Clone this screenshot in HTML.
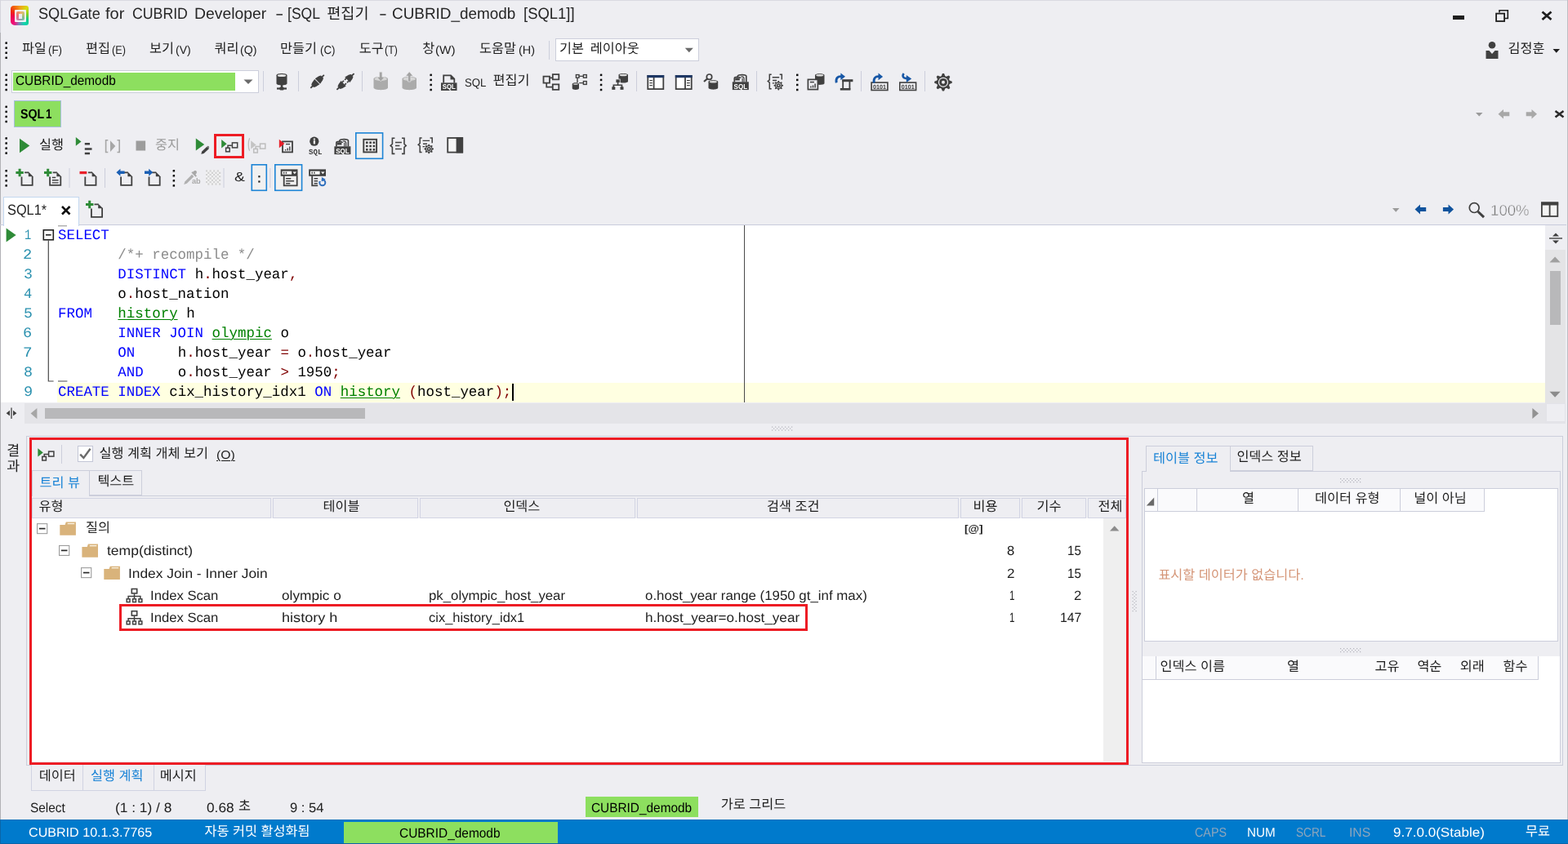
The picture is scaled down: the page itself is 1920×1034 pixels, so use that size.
<!DOCTYPE html>
<html lang="ko"><head><meta charset="utf-8"><title>SQLGate for CUBRID Developer</title>
<style>
html,body{margin:0;padding:0}
body{width:1920px;height:1034px;position:relative;overflow:hidden;background:#EEEEF2;font-family:"Liberation Sans",sans-serif;color:#1E1E1E;text-rendering:geometricPrecision}
.t{position:absolute;white-space:pre;line-height:1;transform-origin:0 0;font-kerning:none}
.b{position:absolute;box-sizing:border-box}
.k{color:#1E1E1E;font-family:"Liberation Sans","Noto Sans CJK KR",sans-serif}
.u{text-decoration:underline;text-underline-offset:2px;text-decoration-thickness:1px}
#root{position:absolute;left:0;top:0;width:1920px;height:1034px;will-change:transform}
#ov{position:absolute;left:0;top:0;width:1920px;height:1034px;pointer-events:none}
</style></head><body>
<div id="root">
<div class="b" style="left:0px;top:0px;width:1920px;height:1px;background:#D9D9E1;"></div>
<div class="b" style="left:0px;top:0px;width:1px;height:40px;background:#D4D4DC;"></div>
<div class="b" style="left:0px;top:40px;width:1px;height:964px;background:#B2B2B6;"></div>
<div class="b" style="left:1918.6px;top:0px;width:1.4px;height:1004px;background:#BDBDC4;"></div>
<div class="b" style="left:13px;top:7px;width:22px;height:24px;border-radius:4px 3px 3px 5px;background:conic-gradient(from 0deg at 50% 50%,#F39A1E 0deg,#D5DC10 45deg,#7FD320 80deg,#0FCB8C 120deg,#12D6B0 150deg,#7F7FB8 185deg,#F0107A 215deg,#EE0050 260deg,#F02A12 300deg,#F2730E 335deg,#F39A1E 360deg)"></div>
<div class="b" style="left:17.5px;top:11.5px;width:14px;height:15.5px;background:#F1F1F5;border-radius:1px;"></div>
<div class="b" style="left:20px;top:14px;width:10px;height:11px;border-radius:2px;opacity:.8;background:conic-gradient(from 0deg at 50% 50%,#F0A04A 0deg,#B8B850 60deg,#70B070 120deg,#60A898 160deg,#C06090 210deg,#E85060 270deg,#F07040 330deg,#F0A04A 360deg)"></div>
<div class="b" style="left:22.5px;top:16.5px;width:4.5px;height:6.5px;background:#ECECF2;"></div>
<span class="t" style="left:46.77px;top:7.55px;font-size:19.2px;color:#262626;transform:scaleX(0.9474);">SQLGate</span>
<span class="t" style="left:129.32px;top:7.55px;font-size:19.2px;color:#262626;transform:scaleX(1.0451);">for</span>
<span class="t" style="left:162.30px;top:7.55px;font-size:19.2px;color:#262626;transform:scaleX(0.9232);">CUBRID</span>
<span class="t" style="left:238.21px;top:7.55px;font-size:19.2px;color:#262626;transform:scaleX(1.0091);">Developer</span>
<span class="t" style="left:336.62px;top:7.55px;font-size:19.2px;color:#262626;transform:scaleX(1.6213);">-</span>
<span class="t" style="left:351.75px;top:7.55px;font-size:19.2px;color:#262626;transform:scaleX(0.9150);">[SQL</span>
<span class="t" style="left:464.09px;top:7.55px;font-size:19.2px;color:#262626;transform:scaleX(1.5360);">-</span>
<span class="t" style="left:480.44px;top:7.55px;font-size:19.2px;color:#262626;transform:scaleX(0.9850);">CUBRID_demodb</span>
<span class="t" style="left:641.08px;top:7.55px;font-size:19.2px;color:#262626;transform:scaleX(0.9621);">[SQL1]]</span>
<span class="t k" style="left:400.2px;top:8.4px;width:55.2px;font-size:18.6px">편집기</span>
<span class="t k" style="left:26.9px;top:51.7px;width:30.7px;font-size:16.3px">파일</span>
<span class="t" style="left:58.77px;top:54.98px;font-size:14.2px;color:#1E1E1E;transform:scaleX(0.9407);">(F)</span>
<span class="t k" style="left:105.0px;top:51.7px;width:30.8px;font-size:16.3px">편집</span>
<span class="t" style="left:137.42px;top:54.98px;font-size:14.2px;color:#1E1E1E;transform:scaleX(0.8912);">(E)</span>
<span class="t k" style="left:183.1px;top:51.7px;width:28.9px;font-size:16.3px">보기</span>
<span class="t" style="left:214.73px;top:54.98px;font-size:14.2px;color:#1E1E1E;transform:scaleX(0.9902);">(V)</span>
<span class="t k" style="left:262.5px;top:51.7px;width:28.7px;font-size:16.3px">쿼리</span>
<span class="t" style="left:294.12px;top:54.98px;font-size:14.2px;color:#1E1E1E;">(Q)</span>
<span class="t k" style="left:343.1px;top:51.7px;width:45.7px;font-size:16.3px">만들기</span>
<span class="t" style="left:391.67px;top:54.98px;font-size:14.2px;color:#1E1E1E;transform:scaleX(0.9414);">(C)</span>
<span class="t k" style="left:439.8px;top:51.7px;width:29.6px;font-size:16.3px">도구</span>
<span class="t" style="left:471.23px;top:54.98px;font-size:14.2px;color:#1E1E1E;transform:scaleX(0.8735);">(T)</span>
<span class="t k" style="left:517.3px;top:51.7px;width:14.1px;font-size:16.3px">창</span>
<span class="t" style="left:533.26px;top:54.98px;font-size:14.2px;color:#1E1E1E;transform:scaleX(1.0711);">(W)</span>
<span class="t k" style="left:587.0px;top:51.7px;width:46.0px;font-size:16.3px">도움말</span>
<span class="t" style="left:635.31px;top:54.98px;font-size:14.2px;color:#1E1E1E;transform:scaleX(1.0139);">(H)</span>
<div class="b" style="left:680px;top:47px;width:176px;height:28px;background:#FFFFFF;border:1px solid #CCCEDB;"></div>
<span class="t k" style="left:685.0px;top:51.8px;width:29.6px;font-size:16.3px">기본</span>
<span class="t k" style="left:722.8px;top:51.8px;width:63.0px;font-size:16.3px">레이아웃</span>
<span class="t k" style="left:1846.5px;top:51.7px;width:46.0px;font-size:16.3px">김정훈</span>
<div class="b" style="left:14px;top:86px;width:302.5px;height:27.5px;background:#FFFFFF;border:1px solid #CCCEDB;"></div>
<div class="b" style="left:16.4px;top:88.75px;width:271.6px;height:22.25px;background:#8DDF5F;"></div>
<span class="t" style="left:18.82px;top:91.20px;font-size:16.3px;color:#000;transform:scaleX(0.9415);">CUBRID_demodb</span>
<span class="t" style="left:569.40px;top:94.15px;font-size:14px;color:#1E1E1E;transform:scaleX(0.9401);">SQL</span>
<span class="t k" style="left:603.5px;top:90.7px;width:45.3px;font-size:16.3px">편집기</span>
<div class="b" style="left:17px;top:123px;width:58px;height:33px;background:#8DDF5F;border:1px solid #A6BEDC;"></div>
<span class="t" style="left:24.79px;top:131.59px;font-size:16.2px;color:#000;font-weight:bold;transform:scaleX(0.8783);">SQL</span>
<span class="t" style="left:56.36px;top:131.59px;font-size:16.2px;color:#000;font-weight:bold;transform:scaleX(0.8225);">1</span>
<span class="t k" style="left:48.0px;top:170.0px;width:30.8px;font-size:16.3px">실행</span>
<span class="t k" style="left:190.0px;top:170.0px;width:29.4px;font-size:16.3px;color:#9C9C9C">중지</span>
<div class="b" style="left:262px;top:164px;width:37px;height:30px;border:3px solid #ED1C24;"></div>
<span class="t" style="left:235.33px;top:217.96px;font-size:9.5px;color:#ABABAB;font-weight:bold;transform:scaleX(0.9598);">ab</span>
<span class="t" style="left:287.33px;top:209.86px;font-size:16px;color:#1E1E1E;transform:scaleX(1.1968);">&amp;</span>
<span class="t" style="left:1825.08px;top:248.56px;font-size:18.6px;color:#7A7A7A;-webkit-text-stroke:0.45px #EEEEF2;">100%</span>
<div class="b" style="left:0px;top:275px;width:1918px;height:1px;background:#C8CBDC;"></div>
<div class="b" style="left:1px;top:276px;width:1891px;height:217px;background:#FFFFFF;"></div>
<div class="b" style="left:70px;top:468.5px;width:1822px;height:24.5px;background:#FFFFE1;"></div>
<div class="b" style="left:911px;top:276px;width:1px;height:217px;background:#4A4A4A;"></div>
<div class="b" style="left:3.5px;top:240.5px;width:93.5px;height:36px;background:#FFFFFF;border:1px solid #C3D7EF;border-bottom:none;"></div>
<span class="t" style="left:9.46px;top:248.83px;font-size:17.8px;color:#1E1E1E;transform:scaleX(0.9190);">SQL1*</span>
<div class="b" style="left:1892px;top:276px;width:24.6px;height:30px;background:#EEEEF2;"></div>
<div class="b" style="left:1892px;top:306px;width:24.6px;height:187.5px;background:#E4E4E6;"></div>
<div class="b" style="left:1897.5px;top:332px;width:13.5px;height:66px;background:#B8B8BA;"></div>
<div class="b" style="left:1px;top:493.5px;width:29px;height:25.5px;background:#EEEEF2;"></div>
<div class="b" style="left:30px;top:493.5px;width:1862px;height:25.5px;background:#E4E4E8;"></div>
<div class="b" style="left:1892px;top:493.5px;width:24.6px;height:25.5px;background:#E3E3E8;"></div>
<div class="b" style="left:1894.3px;top:495px;width:21.3px;height:21.4px;background:#EEEEF2;"></div>
<div class="b" style="left:55px;top:500px;width:392px;height:13px;background:#B8B8BA;"></div>
<span class="t" style="left:30.01px;top:280.81px;font-size:17.46px;color:#2B91AF;font-family:'Liberation Mono',monospace;transform:scaleX(0.7883);">1</span>
<span class="t" style="left:28.48px;top:304.81px;font-size:17.46px;color:#2B91AF;font-family:'Liberation Mono',monospace;transform:scaleX(1.0731);">2</span>
<span class="t" style="left:28.67px;top:328.81px;font-size:17.46px;color:#2B91AF;font-family:'Liberation Mono',monospace;transform:scaleX(1.0389);">3</span>
<span class="t" style="left:28.93px;top:352.81px;font-size:17.46px;color:#2B91AF;font-family:'Liberation Mono',monospace;transform:scaleX(0.9870);">4</span>
<span class="t" style="left:28.67px;top:376.81px;font-size:17.46px;color:#2B91AF;font-family:'Liberation Mono',monospace;transform:scaleX(1.0389);">5</span>
<span class="t" style="left:28.43px;top:400.81px;font-size:17.46px;color:#2B91AF;font-family:'Liberation Mono',monospace;transform:scaleX(1.0675);">6</span>
<span class="t" style="left:28.31px;top:424.81px;font-size:17.46px;color:#2B91AF;font-family:'Liberation Mono',monospace;transform:scaleX(1.1073);">7</span>
<span class="t" style="left:28.61px;top:448.81px;font-size:17.46px;color:#2B91AF;font-family:'Liberation Mono',monospace;transform:scaleX(1.0497);">8</span>
<span class="t" style="left:28.52px;top:472.81px;font-size:17.46px;color:#2B91AF;font-family:'Liberation Mono',monospace;transform:scaleX(1.0663);">9</span>
<span class="t" style="left:71.00px;top:280.81px;font-size:17.46px;color:#0000FF;font-family:'Liberation Mono',monospace;transform:scaleX(1.0000)">SELECT</span>
<span class="t" style="left:144.35px;top:304.81px;font-size:17.46px;color:#8C8C8C;font-family:'Liberation Mono',monospace;transform:scaleX(1.0000)">/*+ recompile */</span>
<span class="t" style="left:144.35px;top:328.81px;font-size:17.46px;color:#0000FF;font-family:'Liberation Mono',monospace;transform:scaleX(1.0000)">DISTINCT</span>
<span class="t" style="left:238.65px;top:328.81px;font-size:17.46px;color:#000000;font-family:'Liberation Mono',monospace;transform:scaleX(1.0000)">h</span>
<span class="t" style="left:249.13px;top:328.81px;font-size:17.46px;color:#800000;font-family:'Liberation Mono',monospace;transform:scaleX(1.0000)">.</span>
<span class="t" style="left:259.60px;top:328.81px;font-size:17.46px;color:#000000;font-family:'Liberation Mono',monospace;transform:scaleX(1.0000)">host_year</span>
<span class="t" style="left:353.91px;top:328.81px;font-size:17.46px;color:#800000;font-family:'Liberation Mono',monospace;transform:scaleX(1.0000)">,</span>
<span class="t" style="left:144.35px;top:352.81px;font-size:17.46px;color:#000000;font-family:'Liberation Mono',monospace;transform:scaleX(1.0000)">o</span>
<span class="t" style="left:154.82px;top:352.81px;font-size:17.46px;color:#800000;font-family:'Liberation Mono',monospace;transform:scaleX(1.0000)">.</span>
<span class="t" style="left:165.30px;top:352.81px;font-size:17.46px;color:#000000;font-family:'Liberation Mono',monospace;transform:scaleX(1.0000)">host_nation</span>
<span class="t" style="left:71.00px;top:376.81px;font-size:17.46px;color:#0000FF;font-family:'Liberation Mono',monospace;transform:scaleX(1.0000)">FROM</span>
<span class="t u" style="left:144.35px;top:376.81px;font-size:17.46px;color:#008000;font-family:'Liberation Mono',monospace;transform:scaleX(1.0000)">history</span>
<span class="t" style="left:228.17px;top:376.81px;font-size:17.46px;color:#000000;font-family:'Liberation Mono',monospace;transform:scaleX(1.0000)">h</span>
<span class="t" style="left:144.35px;top:400.81px;font-size:17.46px;color:#0000FF;font-family:'Liberation Mono',monospace;transform:scaleX(1.0000)">INNER JOIN</span>
<span class="t u" style="left:259.60px;top:400.81px;font-size:17.46px;color:#008000;font-family:'Liberation Mono',monospace;transform:scaleX(1.0000)">olympic</span>
<span class="t" style="left:343.43px;top:400.81px;font-size:17.46px;color:#000000;font-family:'Liberation Mono',monospace;transform:scaleX(1.0000)">o</span>
<span class="t" style="left:144.35px;top:424.81px;font-size:17.46px;color:#0000FF;font-family:'Liberation Mono',monospace;transform:scaleX(1.0000)">ON</span>
<span class="t" style="left:217.69px;top:424.81px;font-size:17.46px;color:#000000;font-family:'Liberation Mono',monospace;transform:scaleX(1.0000)">h</span>
<span class="t" style="left:228.17px;top:424.81px;font-size:17.46px;color:#800000;font-family:'Liberation Mono',monospace;transform:scaleX(1.0000)">.</span>
<span class="t" style="left:238.65px;top:424.81px;font-size:17.46px;color:#000000;font-family:'Liberation Mono',monospace;transform:scaleX(1.0000)">host_year</span>
<span class="t" style="left:343.43px;top:424.81px;font-size:17.46px;color:#800000;font-family:'Liberation Mono',monospace;transform:scaleX(1.0000)">=</span>
<span class="t" style="left:364.38px;top:424.81px;font-size:17.46px;color:#000000;font-family:'Liberation Mono',monospace;transform:scaleX(1.0000)">o</span>
<span class="t" style="left:374.86px;top:424.81px;font-size:17.46px;color:#800000;font-family:'Liberation Mono',monospace;transform:scaleX(1.0000)">.</span>
<span class="t" style="left:385.34px;top:424.81px;font-size:17.46px;color:#000000;font-family:'Liberation Mono',monospace;transform:scaleX(1.0000)">host_year</span>
<span class="t" style="left:144.35px;top:448.81px;font-size:17.46px;color:#0000FF;font-family:'Liberation Mono',monospace;transform:scaleX(1.0000)">AND</span>
<span class="t" style="left:217.69px;top:448.81px;font-size:17.46px;color:#000000;font-family:'Liberation Mono',monospace;transform:scaleX(1.0000)">o</span>
<span class="t" style="left:228.17px;top:448.81px;font-size:17.46px;color:#800000;font-family:'Liberation Mono',monospace;transform:scaleX(1.0000)">.</span>
<span class="t" style="left:238.65px;top:448.81px;font-size:17.46px;color:#000000;font-family:'Liberation Mono',monospace;transform:scaleX(1.0000)">host_year</span>
<span class="t" style="left:343.43px;top:448.81px;font-size:17.46px;color:#800000;font-family:'Liberation Mono',monospace;transform:scaleX(1.0000)">&gt;</span>
<span class="t" style="left:364.38px;top:448.81px;font-size:17.46px;color:#000000;font-family:'Liberation Mono',monospace;transform:scaleX(1.0000)">1950</span>
<span class="t" style="left:406.30px;top:448.81px;font-size:17.46px;color:#800000;font-family:'Liberation Mono',monospace;transform:scaleX(1.0000)">;</span>
<span class="t" style="left:71.00px;top:472.81px;font-size:17.46px;color:#0000FF;font-family:'Liberation Mono',monospace;transform:scaleX(1.0000)">CREATE INDEX</span>
<span class="t" style="left:207.21px;top:472.81px;font-size:17.46px;color:#000000;font-family:'Liberation Mono',monospace;transform:scaleX(1.0000)">cix_history_idx1</span>
<span class="t" style="left:385.34px;top:472.81px;font-size:17.46px;color:#0000FF;font-family:'Liberation Mono',monospace;transform:scaleX(1.0000)">ON</span>
<span class="t u" style="left:416.77px;top:472.81px;font-size:17.46px;color:#008000;font-family:'Liberation Mono',monospace;transform:scaleX(1.0000)">history</span>
<span class="t" style="left:500.60px;top:472.81px;font-size:17.46px;color:#800000;font-family:'Liberation Mono',monospace;transform:scaleX(1.0000)">(</span>
<span class="t" style="left:511.08px;top:472.81px;font-size:17.46px;color:#000000;font-family:'Liberation Mono',monospace;transform:scaleX(1.0000)">host_year</span>
<span class="t" style="left:605.38px;top:472.81px;font-size:17.46px;color:#800000;font-family:'Liberation Mono',monospace;transform:scaleX(1.0000)">)</span>
<span class="t" style="left:615.86px;top:472.81px;font-size:17.46px;color:#800000;font-family:'Liberation Mono',monospace;transform:scaleX(1.0000)">;</span>
<div class="b" style="left:627px;top:470px;width:2px;height:21px;background:#000;"></div>
<div class="b" style="left:32px;top:534px;width:1882px;height:404px;border:1px solid #CCCEDB;"></div>
<span class="t k" style="left:8.2px;top:544.1px;width:17.0px;font-size:17.3px">결</span>
<span class="t k" style="left:8.2px;top:563.1px;width:17.2px;font-size:17.3px">과</span>
<div class="b" style="left:36px;top:536px;width:1346px;height:401px;border:3px solid #ED1C24;z-index:5;"></div>
<div class="b" style="left:95px;top:546px;width:19px;height:19.5px;background:#FFFFFF;border:1px solid #C3C6D6;"></div>
<span class="t k" style="left:121.5px;top:547.7px;width:143.0px;font-size:16.3px">실행 계획 개체 보기</span>
<span class="t u" style="left:265.02px;top:550.98px;font-size:14.2px;color:#1E1E1E;transform:scaleX(1.1098);">(O)</span>
<div class="b" style="left:39px;top:607px;width:1340px;height:1px;background:#CCCEDB;"></div>
<div class="b" style="left:39px;top:576px;width:71px;height:32px;background:#EEEEF2;border:1px solid #CCCEDB;border-bottom:none;"></div>
<div class="b" style="left:109px;top:576px;width:65px;height:31px;background:#EEEEF2;border:1px solid #CCCEDB;"></div>
<span class="t k" style="left:48.6px;top:584.0px;width:52.6px;font-size:16.3px;color:#1B84D6">트리 뷰</span>
<span class="t k" style="left:119.4px;top:582.4px;width:45.2px;font-size:16.3px">텍스트</span>
<div class="b" style="left:39px;top:610px;width:293px;height:24.5px;background:#EEEEF2;border:1px solid #D2D4E3;"></div>
<div class="b" style="left:334px;top:610px;width:178px;height:24.5px;background:#EEEEF2;border:1px solid #D2D4E3;"></div>
<div class="b" style="left:514px;top:610px;width:264px;height:24.5px;background:#EEEEF2;border:1px solid #D2D4E3;"></div>
<div class="b" style="left:780px;top:610px;width:394px;height:24.5px;background:#EEEEF2;border:1px solid #D2D4E3;"></div>
<div class="b" style="left:1176px;top:610px;width:73px;height:24.5px;background:#EEEEF2;border:1px solid #D2D4E3;"></div>
<div class="b" style="left:1251px;top:610px;width:79px;height:24.5px;background:#EEEEF2;border:1px solid #D2D4E3;"></div>
<div class="b" style="left:1332px;top:610px;width:47px;height:24.5px;background:#EEEEF2;border:1px solid #D2D4E3;"></div>
<span class="t k" style="left:47.6px;top:613.2px;width:30.6px;font-size:16.3px">유형</span>
<span class="t k" style="left:395.6px;top:613.2px;width:47.0px;font-size:16.3px">테이블</span>
<span class="t k" style="left:616.4px;top:613.2px;width:48.8px;font-size:16.3px">인덱스</span>
<span class="t k" style="left:939.0px;top:613.2px;width:69.0px;font-size:16.3px">검색 조건</span>
<span class="t k" style="left:1191.6px;top:613.2px;width:31.4px;font-size:16.3px">비용</span>
<span class="t k" style="left:1269.6px;top:613.2px;width:31.2px;font-size:16.3px">기수</span>
<span class="t k" style="left:1344.6px;top:613.2px;width:31.6px;font-size:16.3px">전체</span>
<div class="b" style="left:39px;top:634.5px;width:1312px;height:298px;background:#FFFFFF;"></div>
<div class="b" style="left:1351px;top:634.5px;width:28px;height:298px;background:#EFEFEF;"></div>
<span class="t k" style="left:105.0px;top:638.8px;width:30.6px;font-size:16.3px">질의</span>
<span class="t" style="left:130.53px;top:667.34px;font-size:16.2px;color:#1E1E1E;transform:scaleX(1.0815);">temp(distinct)</span>
<span class="t" style="left:156.80px;top:694.59px;font-size:16.2px;color:#1E1E1E;transform:scaleX(1.0711);">Index Join - Inner Join</span>
<span class="t" style="left:183.66px;top:721.84px;font-size:16.2px;color:#1E1E1E;transform:scaleX(1.0292);">Index Scan</span>
<span class="t" style="left:183.66px;top:749.09px;font-size:16.2px;color:#1E1E1E;transform:scaleX(1.0292);">Index Scan</span>
<span class="t" style="left:345.28px;top:721.84px;font-size:16.2px;color:#1E1E1E;transform:scaleX(1.0647);">olympic o</span>
<span class="t" style="left:344.74px;top:749.09px;font-size:16.2px;color:#1E1E1E;transform:scaleX(1.1177);">history h</span>
<span class="t" style="left:524.72px;top:721.84px;font-size:16.2px;color:#1E1E1E;transform:scaleX(1.0371);">pk_olympic_host_year</span>
<span class="t" style="left:525.10px;top:749.09px;font-size:16.2px;color:#1E1E1E;transform:scaleX(1.0178);">cix_history_idx1</span>
<span class="t" style="left:790.49px;top:721.84px;font-size:16.2px;color:#1E1E1E;transform:scaleX(1.0414);">o.host_year range (1950 gt_inf max)</span>
<span class="t" style="left:790.01px;top:749.09px;font-size:16.2px;color:#1E1E1E;transform:scaleX(1.0588);">h.host_year=o.host_year</span>
<span class="t" style="left:1181.23px;top:641.73px;font-size:12.6px;color:#1E1E1E;font-weight:bold;transform:scaleX(1.0902);">[@]</span>
<span class="t" style="left:1233.48px;top:667.34px;font-size:16.2px;color:#1E1E1E;transform:scaleX(1.0261);">8</span>
<span class="t" style="left:1307.25px;top:667.34px;font-size:16.2px;color:#1E1E1E;transform:scaleX(0.9314);">15</span>
<span class="t" style="left:1233.34px;top:694.59px;font-size:16.2px;color:#1E1E1E;transform:scaleX(1.0569);">2</span>
<span class="t" style="left:1307.25px;top:694.59px;font-size:16.2px;color:#1E1E1E;transform:scaleX(0.9314);">15</span>
<span class="t" style="left:1235.52px;top:721.84px;font-size:16.2px;color:#1E1E1E;transform:scaleX(0.7159);">1</span>
<span class="t" style="left:1314.96px;top:721.84px;font-size:16.2px;color:#1E1E1E;transform:scaleX(1.0298);">2</span>
<span class="t" style="left:1235.52px;top:749.09px;font-size:16.2px;color:#1E1E1E;transform:scaleX(0.7159);">1</span>
<span class="t" style="left:1297.79px;top:749.09px;font-size:16.2px;color:#1E1E1E;transform:scaleX(0.9768);">147</span>
<div class="b" style="left:146px;top:740px;width:843px;height:33px;border:3px solid #ED1C24;z-index:5;"></div>
<div class="b" style="left:1398px;top:576px;width:1513px;height:0px;"></div>
<div class="b" style="left:1398px;top:576.5px;width:513px;height:358.5px;border:1px solid #CCCEDB;"></div>
<div class="b" style="left:1403px;top:546px;width:104px;height:32px;background:#EEEEF2;border:1px solid #CCCEDB;border-bottom:none;"></div>
<div class="b" style="left:1506px;top:546px;width:102px;height:30.5px;background:#EEEEF2;border:1px solid #CCCEDB;"></div>
<span class="t k" style="left:1412.0px;top:553.8px;width:85.8px;font-size:16.3px;color:#1B84D6">테이블 정보</span>
<span class="t k" style="left:1514.4px;top:552.4px;width:85.4px;font-size:16.3px">인덱스 정보</span>
<div class="b" style="left:1401px;top:598px;width:507px;height:187.5px;background:#FFFFFF;border:1px solid #CCCEDB;"></div>
<div class="b" style="left:1401px;top:598px;width:16.5px;height:29px;background:#FAFAFC;border:1px solid #CCCEDB;"></div>
<div class="b" style="left:1416.5px;top:598px;width:49.0px;height:29px;background:#FAFAFC;border:1px solid #CCCEDB;"></div>
<div class="b" style="left:1464.5px;top:598px;width:125.5px;height:29px;background:#FAFAFC;border:1px solid #CCCEDB;"></div>
<div class="b" style="left:1589px;top:598px;width:125.5px;height:29px;background:#FAFAFC;border:1px solid #CCCEDB;"></div>
<div class="b" style="left:1713.5px;top:598px;width:104.5px;height:29px;background:#FAFAFC;border:1px solid #CCCEDB;"></div>
<span class="t k" style="left:1521.0px;top:602.8px;width:12.6px;font-size:16.3px">열</span>
<span class="t k" style="left:1610.0px;top:602.6px;width:84.8px;font-size:16.3px">데이터 유형</span>
<span class="t k" style="left:1731.2px;top:602.6px;width:69.0px;font-size:16.3px">널이 아님</span>
<span class="t k" style="left:1418.4px;top:696.6px;width:193.2px;font-size:16.3px;color:#D59678">표시할 데이터가 없습니다.</span>
<div class="b" style="left:1399px;top:804px;width:511px;height:129.6px;background:#FFFFFF;"></div>
<div class="b" style="left:1399px;top:804px;width:16.5px;height:28.5px;background:#FAFAFC;border:1px solid #CCCEDB;border-top:none;border-left:none;"></div>
<div class="b" style="left:1415.5px;top:804px;width:468.5px;height:28.5px;background:#FAFAFC;border:1px solid #CCCEDB;border-top:none;border-left:none;"></div>
<span class="t k" style="left:1420.6px;top:808.7px;width:85.6px;font-size:16.3px">인덱스 이름</span>
<span class="t k" style="left:1576.0px;top:808.7px;width:12.6px;font-size:16.3px">열</span>
<span class="t k" style="left:1683.6px;top:808.7px;width:31.6px;font-size:16.3px">고유</span>
<span class="t k" style="left:1735.4px;top:808.7px;width:31.6px;font-size:16.3px">역순</span>
<span class="t k" style="left:1787.8px;top:808.7px;width:31.6px;font-size:16.3px">외래</span>
<span class="t k" style="left:1840.6px;top:808.7px;width:31.6px;font-size:16.3px">함수</span>
<div class="b" style="left:38px;top:937px;width:214px;height:32px;background:#EEEEF2;border:1px solid #D0D3E2;border-top:none;"></div>
<div class="b" style="left:101px;top:937px;width:1px;height:31px;background:#D0D3E2;"></div>
<div class="b" style="left:188px;top:937px;width:1px;height:31px;background:#D0D3E2;"></div>
<span class="t k" style="left:47.7px;top:942.8px;width:44.2px;font-size:16.3px">데이터</span>
<span class="t k" style="left:111.0px;top:943.2px;width:66.6px;font-size:16.3px;color:#1B84D6">실행 계획</span>
<span class="t k" style="left:195.8px;top:942.8px;width:46.6px;font-size:16.3px">메시지</span>
<span class="t" style="left:36.50px;top:981.72px;font-size:16.4px;color:#1E1E1E;transform:scaleX(0.9393);">Select</span>
<span class="t" style="left:141.32px;top:981.72px;font-size:16.4px;color:#1E1E1E;transform:scaleX(1.0580);">(1 : 1) / 8</span>
<span class="t" style="left:252.73px;top:981.72px;font-size:16.4px;color:#1E1E1E;transform:scaleX(1.0535);">0.68</span>
<span class="t k" style="left:292.0px;top:979.6px;width:13.8px;font-size:16.3px">초</span>
<span class="t" style="left:355.02px;top:981.72px;font-size:16.4px;color:#1E1E1E;transform:scaleX(1.0105);">9 : 54</span>
<div class="b" style="left:717px;top:976px;width:138px;height:24.5px;background:#8DDF5F;"></div>
<span class="t" style="left:723.62px;top:981.69px;font-size:16.2px;color:#000;transform:scaleX(0.9504);">CUBRID_demodb</span>
<span class="t k" style="left:882.8px;top:978.4px;width:84.4px;font-size:16.3px">가로 그리드</span>
<div class="b" style="left:0px;top:1004px;width:1920px;height:30px;background:#007ACC;"></div>
<div class="b" style="left:0px;top:1004px;width:1px;height:30px;background:#0A66A8;"></div>
<span class="t" style="left:35.38px;top:1012.83px;font-size:15.8px;color:#FFFFFF;transform:scaleX(1.0193);">CUBRID 10.1.3.7765</span>
<span class="t k" style="left:250.6px;top:1010.8px;width:136.6px;font-size:16.3px;color:#FFFFFF">자동 커밋 활성화됨</span>
<div class="b" style="left:421px;top:1007px;width:262px;height:25.5px;background:#8DDF5F;"></div>
<div class="b" style="left:0px;top:1032.5px;width:1920px;height:1.5px;background:#0A64A6;"></div>
<div class="b" style="left:0px;top:1004px;width:1920px;height:1px;background:#0C72BC;"></div>
<span class="t" style="left:489.42px;top:1012.59px;font-size:16.2px;color:#000;transform:scaleX(0.9536);">CUBRID_demodb</span>
<span class="t" style="left:1463.07px;top:1013.03px;font-size:15.8px;color:#8EA6BC;transform:scaleX(0.9061);">CAPS</span>
<span class="t" style="left:1526.95px;top:1013.03px;font-size:15.8px;color:#FFFFFF;transform:scaleX(0.9644);">NUM</span>
<span class="t" style="left:1586.58px;top:1013.03px;font-size:15.8px;color:#8EA6BC;transform:scaleX(0.8654);">SCRL</span>
<span class="t" style="left:1651.55px;top:1013.03px;font-size:15.8px;color:#8EA6BC;transform:scaleX(0.9936);">INS</span>
<span class="t" style="left:1706.20px;top:1013.03px;font-size:15.8px;color:#FFFFFF;transform:scaleX(1.0793);">9.7.0.0(Stable)</span>
<span class="t k" style="left:1868.0px;top:1010.6px;width:29.4px;font-size:16.3px;color:#FFFFFF">무료</span>
<svg id="ov" viewBox="0 0 1920 1034" width="1920" height="1034">
<rect x="1779" y="19" width="14" height="5" fill="#1e1e1e"/>
<path d="M1836 15.5V12.7H1846.3V22.5H1843" fill="none" stroke="#1e1e1e" stroke-width="1.6"/><rect x="1832.1" y="16.6" width="10" height="9.4" fill="none" stroke="#1e1e1e" stroke-width="1.8"/>
<path d="M1888.5 14.5L1899.5 24M1899.5 14.5L1888.5 24" stroke="#1e1e1e" stroke-width="2.8" fill="none"/>
<rect x="5.4" y="50.5" width="1.6" height="1.6" fill="#FAFAFF"/><rect x="6.4" y="51.4" width="2.5" height="2.5" fill="#111"/><rect x="5.4" y="56.55" width="1.6" height="1.6" fill="#FAFAFF"/><rect x="6.4" y="57.449999999999996" width="2.5" height="2.5" fill="#111"/><rect x="5.4" y="62.6" width="1.6" height="1.6" fill="#FAFAFF"/><rect x="6.4" y="63.5" width="2.5" height="2.5" fill="#111"/><rect x="5.4" y="68.64999999999999" width="1.6" height="1.6" fill="#FAFAFF"/><rect x="6.4" y="69.55" width="2.5" height="2.5" fill="#111"/>
<rect x="672" y="50" width="1" height="23" fill="#CCCEDB"/>
<path d="M838.8 58.8H848.8L843.8 64.2Z" fill="#6A6A6A"/>
<circle cx="1827" cy="55.3" r="4.3" fill="#404040"/><path d="M1819.5 62H1823.5L1827 66L1830.5 62H1834.5V72H1819.5Z" fill="#404040"/>
<path d="M1901.5 60H1910L1905.75 64.8Z" fill="#1e1e1e"/>
<rect x="5.4" y="89.69999999999999" width="1.6" height="1.6" fill="#FAFAFF"/><rect x="6.4" y="90.6" width="2.5" height="2.5" fill="#111"/><rect x="5.4" y="95.74999999999999" width="1.6" height="1.6" fill="#FAFAFF"/><rect x="6.4" y="96.64999999999999" width="2.5" height="2.5" fill="#111"/><rect x="5.4" y="101.79999999999998" width="1.6" height="1.6" fill="#FAFAFF"/><rect x="6.4" y="102.69999999999999" width="2.5" height="2.5" fill="#111"/><rect x="5.4" y="107.85" width="1.6" height="1.6" fill="#FAFAFF"/><rect x="6.4" y="108.75" width="2.5" height="2.5" fill="#111"/>
<path d="M298.5 97.5H309.5L304 103Z" fill="#6A6A6A"/>
<rect x="322" y="87" width="1" height="25" fill="#CCCEDB"/>
<rect x="365" y="87" width="1" height="25" fill="#CCCEDB"/>
<rect x="443" y="87" width="1" height="25" fill="#CCCEDB"/>
<g transform="translate(338.5,90)"><path d="M0 2.2C0 -0.7 13 -0.7 13 2.2V12.3C13 15.2 0 15.2 0 12.3Z" fill="#404040"/><ellipse cx="6.5" cy="2.4" rx="5.2" ry="1.5" fill="#E6E6E6"/><rect x="5.3" y="14" width="2.4" height="4" fill="#404040"/><rect x="0.5" y="17.4" width="12" height="2.2" fill="#404040"/><rect x="4" y="16.4" width="5" height="4.2" rx="1" fill="#404040"/></g>
<g transform="translate(388.6,99.8)"><g transform="rotate(-44)"><path d="M-11.5 -0.9H-8.2 V-2.2L-5.8 -3.4L-0.45 -4.5V4.5L-5.8 3.4L-8.2 2.2V0.9H-11.5ZM11.5 -0.9H8.2 V-2.2L5.8 -3.4L0.45 -4.5V4.5L5.8 3.4L8.2 2.2V0.9H11.5Z" fill="#404040"/></g></g>
<g transform="translate(423,100)"><g transform="rotate(-43)"><path d="M-14.5 -0.9H-11 V-2.2L-8.4 -3.4L-3.2 -4.5V4.5L-8.4 3.4L-11 2.2V0.9H-14.5ZM14.5 -0.9H11 V-2.2L8.4 -3.4L3.2 -4.5V4.5L8.4 3.4L11 2.2V0.9H14.5Z" fill="#404040"/><rect x="-3.3" y="-3" width="6.6" height="1.6" fill="#404040"/><rect x="-3.3" y="1.4" width="6.6" height="1.6" fill="#404040"/><rect x="-0.7" y="-3.4" width="1.4" height="6.8" fill="#EEEEF2"/></g></g>
<g transform="translate(457.5,89)"><path d="M0 7.5C0 4.2 17.5 4.2 17.5 7.5V18.6C17.5 22 0 22 0 18.6Z" fill="#ABABAB"/><ellipse cx="8.75" cy="7.7" rx="7.6" ry="2.3" fill="#D6D6D6"/><path d="M8.75 10.8L13.4 5.4H10.4V-0.8H7.1V5.4H4.1Z" fill="#A2A2A2" stroke="#E4E4E4" stroke-width="0.6"/></g>
<g transform="translate(492.5,89)"><path d="M0 7.5C0 4.2 17.5 4.2 17.5 7.5V18.6C17.5 22 0 22 0 18.6Z" fill="#ABABAB"/><ellipse cx="8.75" cy="7.7" rx="7.6" ry="2.3" fill="#D6D6D6"/><path d="M8.75 -1.2L13.4 4.2H10.4V11H7.1V4.2H4.1Z" fill="#A2A2A2" stroke="#EEEEF2" stroke-width="0.6"/></g>
<rect x="525.4" y="89.69999999999999" width="1.6" height="1.6" fill="#FAFAFF"/><rect x="526.4" y="90.6" width="2.5" height="2.5" fill="#111"/><rect x="525.4" y="95.74999999999999" width="1.6" height="1.6" fill="#FAFAFF"/><rect x="526.4" y="96.64999999999999" width="2.5" height="2.5" fill="#111"/><rect x="525.4" y="101.79999999999998" width="1.6" height="1.6" fill="#FAFAFF"/><rect x="526.4" y="102.69999999999999" width="2.5" height="2.5" fill="#111"/><rect x="525.4" y="107.85" width="1.6" height="1.6" fill="#FAFAFF"/><rect x="526.4" y="108.75" width="2.5" height="2.5" fill="#111"/>
<g transform="translate(540,91.5)"><path d="M3.2 10V0.9H12L16.3 5.2V10" fill="none" stroke="#404040" stroke-width="1.8"/><path d="M11.5 0.5V6H17" fill="#404040"/><g transform="translate(0,9.9)"><rect x="0" y="0" width="19.5" height="9.6" fill="#404040"/><text x="9.75" y="8.1" font-size="8.6" font-weight="bold" fill="#fff" text-anchor="middle" textLength="16.0" lengthAdjust="spacingAndGlyphs" font-family="Liberation Sans,sans-serif">SQL</text></g></g>
<g transform="translate(664.6,90.2)"><path d="M0.9 3.4H8.4V11.4H0.9ZM12.2 0.9H19.7V7.2H12.2ZM12.2 13.2H19.7V19.6H12.2Z" fill="none" stroke="#404040" stroke-width="1.8"/><path d="M8.4 5.2H12.2M4.6 11.4V16.4H12.2" fill="none" stroke="#404040" stroke-width="1.7"/></g>
<g transform="translate(700.4,90.6)"><path d="M0.3 12.4C0.3 10.2 8.6 10.2 8.6 12.4V17.6C8.6 19.9 0.3 19.9 0.3 17.6Z" fill="#404040"/><ellipse cx="4.45" cy="12.5" rx="3.1" ry="0.9" fill="#C8C8C8"/><path d="M6.6 10.4V4.6M8.6 2.8H14M8.8 11H14" fill="none" stroke="#404040" stroke-width="1.4"/><rect x="5" y="1" width="3.6" height="3.6" fill="#EEEEF2" stroke="#404040" stroke-width="1.4"/><rect x="14" y="1" width="3.8" height="3.6" fill="#EEEEF2" stroke="#404040" stroke-width="1.4"/><rect x="14" y="9" width="3.8" height="3.8" fill="#EEEEF2" stroke="#404040" stroke-width="1.4"/></g>
<rect x="733.8" y="89.69999999999999" width="1.6" height="1.6" fill="#FAFAFF"/><rect x="734.8" y="90.6" width="2.5" height="2.5" fill="#111"/><rect x="733.8" y="95.74999999999999" width="1.6" height="1.6" fill="#FAFAFF"/><rect x="734.8" y="96.64999999999999" width="2.5" height="2.5" fill="#111"/><rect x="733.8" y="101.79999999999998" width="1.6" height="1.6" fill="#FAFAFF"/><rect x="734.8" y="102.69999999999999" width="2.5" height="2.5" fill="#111"/><rect x="733.8" y="107.85" width="1.6" height="1.6" fill="#FAFAFF"/><rect x="734.8" y="108.75" width="2.5" height="2.5" fill="#111"/>
<g transform="translate(749,90)"><path d="M8.5 1.8C8.5 -0.5 20 -0.5 20 1.8V9.8C20 12.2 8.5 12.2 8.5 9.8Z" fill="#404040"/><ellipse cx="14.25" cy="2" rx="4.6" ry="1.3" fill="#DDD"/><rect x="5" y="7" width="5.2" height="4.4" fill="#404040" stroke="#EEEEF2" stroke-width="0.8"/><path d="M7.6 11V14.2M2.3 17V14.2H12.5V17" fill="none" stroke="#404040" stroke-width="1.6"/><rect x="0.3" y="16.3" width="4" height="3.6" fill="#404040"/><rect x="10.5" y="16.3" width="4" height="3.6" fill="#404040"/></g>
<rect x="779" y="87" width="1" height="25" fill="#CCCEDB"/>
<g transform="translate(792.4,92)"><rect x="0.9" y="0.9" width="19" height="16.2" fill="#FFFFFF" stroke="#404040" stroke-width="1.8"/><rect x="0" y="0" width="20.8" height="3.2" fill="#1F3864"/><path d="M8.2 3V17" stroke="#404040" stroke-width="1.8"/><path d="M3 6.6H6.4M3 9.6H6.4M3 12.6H6.4" stroke="#404040" stroke-width="1.4"/></g>
<g transform="translate(826.8,92)"><rect x="0.9" y="0.9" width="19" height="16.2" fill="#FFFFFF" stroke="#404040" stroke-width="1.8"/><rect x="0" y="0" width="20.8" height="3.2" fill="#1F3864"/><path d="M12.2 3V17" stroke="#404040" stroke-width="1.8"/><path d="M14.2 6.6H18M14.2 9.6H18M14.2 12.6H18" stroke="#404040" stroke-width="1.4"/></g>
<g transform="translate(861,90)"><circle cx="7.5" cy="4.2" r="3.2" fill="#EEEEF2" stroke="#404040" stroke-width="1.7"/><path d="M5 6.5L1 10" stroke="#404040" stroke-width="2.2"/><path d="M6.5 10.2C6.5 7.6 18.2 7.6 18.2 10.2V17.6C18.2 20.4 6.5 20.4 6.5 17.6Z" fill="#404040"/><ellipse cx="12.35" cy="10.3" rx="4.6" ry="1.3" fill="#DDD"/></g>
<g transform="translate(896.8,90.5)"><path d="M2.5 10V5.5C2.5 3.4 9.8 3.4 9.8 5.5" fill="none" stroke="#404040" stroke-width="1.7"/><path d="M6.5 4V2.8C6.5 0.6 17 0.6 17 2.8V10" fill="none" stroke="#404040" stroke-width="1.7"/><path d="M10.5 3.5C13.5 3 14.3 4.5 14.3 6V10M12.3 5.2V10" fill="none" stroke="#404040" stroke-width="1.2"/><path d="M3.4 5.4C5 4.6 7.5 4.7 9 5.4V8H3.4Z" fill="#404040"/><g transform="translate(0,9.8)"><rect x="0" y="0" width="20" height="9.8" fill="#404040"/><text x="10.0" y="8.3" font-size="8.6" font-weight="bold" fill="#fff" text-anchor="middle" textLength="16.5" lengthAdjust="spacingAndGlyphs" font-family="Liberation Sans,sans-serif">SQL</text></g></g>
<rect x="926" y="87" width="1" height="25" fill="#CCCEDB"/>
<g transform="translate(939.7,90.5)"><path d="M5 0.8H2.6V7.4L0.6 9L2.6 10.6V18.2H5" fill="none" stroke="#404040" stroke-width="1.5"/><path d="M15 0.8H17.6V7" fill="none" stroke="#404040" stroke-width="1.5"/><path d="M6 4.2H14.5M6.4 8H11.4M6 11.4H8.6" stroke="#404040" stroke-width="1.4"/><g transform="translate(13.6,14.2)"><path d="M5.77 -0.57L5.77 0.57L4.11 1.25L3.79 2.02L4.48 3.68L3.68 4.48L2.02 3.79L1.25 4.11L0.57 5.77L-0.57 5.77L-1.25 4.11L-2.02 3.79L-3.68 4.48L-4.48 3.68L-3.79 2.02L-4.11 1.25L-5.77 0.57L-5.77 -0.57L-4.11 -1.25L-3.79 -2.02L-4.48 -3.68L-3.68 -4.48L-2.02 -3.79L-1.25 -4.11L-0.57 -5.77L0.57 -5.77L1.25 -4.11L2.02 -3.79L3.68 -4.48L4.48 -3.68L3.79 -2.02L4.11 -1.25Z" fill="#404040"/><circle r="2.09" fill="#EEEEF2"/><circle r="3.1" fill="#EEEEF2"/><circle r="2.5" fill="#404040"/><circle r="0.9" fill="#EEEEF2"/></g></g>
<rect x="974.0" y="89.69999999999999" width="1.6" height="1.6" fill="#FAFAFF"/><rect x="975.0" y="90.6" width="2.5" height="2.5" fill="#111"/><rect x="974.0" y="95.74999999999999" width="1.6" height="1.6" fill="#FAFAFF"/><rect x="975.0" y="96.64999999999999" width="2.5" height="2.5" fill="#111"/><rect x="974.0" y="101.79999999999998" width="1.6" height="1.6" fill="#FAFAFF"/><rect x="975.0" y="102.69999999999999" width="2.5" height="2.5" fill="#111"/><rect x="974.0" y="107.85" width="1.6" height="1.6" fill="#FAFAFF"/><rect x="975.0" y="108.75" width="2.5" height="2.5" fill="#111"/>
<g transform="translate(988.5,90)"><path d="M9.5 2C9.5 -0.5 21 -0.5 21 2V12C21 14.5 9.5 14.5 9.5 12Z" fill="#404040"/><ellipse cx="15.25" cy="2.2" rx="4.6" ry="1.3" fill="#DDD"/><rect x="0.9" y="7.4" width="12" height="12.2" fill="#EEEEF2" stroke="#404040" stroke-width="1.7"/><path d="M3.4 10.6H8.4" stroke="#404040" stroke-width="1.5"/><path d="M4.4 17.4V15.6M7 17.4V14.4M9.6 17.4V12.6" stroke="#404040" stroke-width="1.5"/></g>
<g transform="translate(1022.6,89.8)"><g transform="translate(0,0)"><path d="M1.6 11.6C0.4 6 3.4 3.4 7.6 3.8" fill="none" stroke="#1757A6" stroke-width="2.8"/><path d="M6.8 -0.4L12.4 4L6.8 8.4Z" fill="#1757A6"/></g><rect x="8.6" y="7.4" width="13.2" height="3" fill="#404040"/><path d="M9.6 8V18.6M17.8 10V20" stroke="#404040" stroke-width="1.8"/><rect x="6.2" y="18.2" width="12.6" height="2.6" fill="#404040"/></g>
<rect x="1054" y="87" width="1" height="25" fill="#CCCEDB"/>
<g transform="translate(1066.3,91.5)"><rect x="0.8" y="9.6" width="19.8" height="9.4" fill="#EEEEF2" stroke="#404040" stroke-width="1.6"/><text x="10.7" y="17.2" font-size="7.6" font-weight="bold" fill="#404040" text-anchor="middle" textLength="16" lengthAdjust="spacingAndGlyphs" font-family="Liberation Sans,sans-serif">0101</text><g transform="translate(2.4,-1.6)"><path d="M1.6 11.6C0.4 6 3.4 3.4 7.6 3.8" fill="none" stroke="#1757A6" stroke-width="2.8"/><path d="M6.8 -0.4L12.4 4L6.8 8.4Z" fill="#1757A6"/></g></g>
<g transform="translate(1101,91.5)"><rect x="0.8" y="9.6" width="19.8" height="9.4" fill="#EEEEF2" stroke="#404040" stroke-width="1.6"/><text x="10.7" y="17.2" font-size="7.6" font-weight="bold" fill="#404040" text-anchor="middle" textLength="16" lengthAdjust="spacingAndGlyphs" font-family="Liberation Sans,sans-serif">0101</text><g transform="translate(2.6,-1.8)"><path d="M3.2 0.4C0.8 3 2 6.2 6.4 6.4" fill="none" stroke="#1757A6" stroke-width="2.6"/><path d="M6.2 2.2L12.6 6.8L6.2 11.4Z" fill="#1757A6"/></g></g>
<rect x="1132" y="87" width="1" height="25" fill="#CCCEDB"/>
<g transform="translate(1155,100.8)"><path d="M10.75 -1.06L10.75 1.06L7.65 2.32L7.05 3.77L8.35 6.85L6.85 8.35L3.77 7.05L2.32 7.65L1.06 10.75L-1.06 10.75L-2.32 7.65L-3.77 7.05L-6.85 8.35L-8.35 6.85L-7.05 3.77L-7.65 2.32L-10.75 1.06L-10.75 -1.06L-7.65 -2.32L-7.05 -3.77L-8.35 -6.85L-6.85 -8.35L-3.77 -7.05L-2.32 -7.65L-1.06 -10.75L1.06 -10.75L2.32 -7.65L3.77 -7.05L6.85 -8.35L8.35 -6.85L7.05 -3.77L7.65 -2.32Z" fill="#404040"/><circle r="3.89" fill="#EEEEF2"/><circle r="6.1" fill="#EEEEF2"/><circle r="4.9" fill="#404040"/><circle r="2" fill="#EEEEF2"/></g>
<rect x="5.4" y="128.7" width="1.6" height="1.6" fill="#FAFAFF"/><rect x="6.4" y="129.6" width="2.5" height="2.5" fill="#111"/><rect x="5.4" y="134.75" width="1.6" height="1.6" fill="#FAFAFF"/><rect x="6.4" y="135.65" width="2.5" height="2.5" fill="#111"/><rect x="5.4" y="140.79999999999998" width="1.6" height="1.6" fill="#FAFAFF"/><rect x="6.4" y="141.7" width="2.5" height="2.5" fill="#111"/><rect x="5.4" y="146.85" width="1.6" height="1.6" fill="#FAFAFF"/><rect x="6.4" y="147.75" width="2.5" height="2.5" fill="#111"/>
<path d="M1807 138H1815.5L1811.25 142.5Z" fill="#9A9A9A"/>
<path d="M1834.5 139.7L1841 134V137.3H1848.3V142.2H1841V145.5Z" fill="#A8A8A8"/>
<path d="M1882 139.7L1875.5 134V137.3H1868.7V142.2H1875.5V145.5Z" fill="#A8A8A8"/>
<path d="M1904.5 136L1914.5 143.5M1914.5 136L1904.5 143.5" stroke="#2a2a2a" stroke-width="2.6" fill="none"/>
<rect x="5.4" y="167.29999999999998" width="1.6" height="1.6" fill="#FAFAFF"/><rect x="6.4" y="168.2" width="2.5" height="2.5" fill="#111"/><rect x="5.4" y="173.35" width="1.6" height="1.6" fill="#FAFAFF"/><rect x="6.4" y="174.25" width="2.5" height="2.5" fill="#111"/><rect x="5.4" y="179.39999999999998" width="1.6" height="1.6" fill="#FAFAFF"/><rect x="6.4" y="180.29999999999998" width="2.5" height="2.5" fill="#111"/><rect x="5.4" y="185.45" width="1.6" height="1.6" fill="#FAFAFF"/><rect x="6.4" y="186.35" width="2.5" height="2.5" fill="#111"/>
<path d="M24 169.8L36.3 178.5L24 187.2Z" fill="#2E8B37"/>
<path d="M92.8 168L99.5 173.4L92.8 178.8Z" fill="#2E8B37"/>
<path d="M103.8 176.2H110M103.8 182.4H112.5M103.8 188H110" stroke="#404040" stroke-width="2.5"/>
<path d="M132.3 171.7H129.6V186.5H132.3M143.5 171.7H146.2V186.5H143.5" fill="none" stroke="#A6A6A6" stroke-width="1.6"/><path d="M135 172.3L141.3 179.1L135 185.9Z" fill="#A6A6A6"/>
<rect x="166.5" y="172.5" width="11.6" height="12" fill="#9C9C9C"/>
<path d="M239.8 169.4L250.2 177L239.8 184.6Z" fill="#2E8B37"/>
<path d="M246.3 188.8L247.3 185.6L253.3 179.8L255.8 182.2L249.6 188Z" fill="#404040"/><path d="M253.3 179.8L254.3 178.9C255 178.3 256.8 180 256 180.9L255.8 182.2Z" fill="#707070"/>
<g transform="translate(271.2,171)"><path d="M0 0L6.4 5.2L0 10.4Z" fill="#2E8B37"/><rect x="13.2" y="3.9" width="6.3" height="6" fill="none" stroke="#404040" stroke-width="1.5"/><rect x="5.4" y="10.2" width="4.6" height="4.6" fill="none" stroke="#404040" stroke-width="1.5"/><path d="M7.8 10V7.2H12.6" fill="none" stroke="#404040" stroke-width="1.5"/></g>
<g transform="translate(307.2,172.2)"><path d="M0 0L6.4 5.2L0 10.4Z" fill="#C4C4C4"/><rect x="11.299999999999999" y="3.9" width="6.3" height="6" fill="none" stroke="#BDBDBD" stroke-width="1.5"/><rect x="3.5000000000000004" y="10.2" width="4.6" height="4.6" fill="none" stroke="#BDBDBD" stroke-width="1.5"/><path d="M5.9 10V7.2H10.7" fill="none" stroke="#BDBDBD" stroke-width="1.5"/><path d="M-1.6 -3C-3.4 1 -3.4 9 -1.6 12.6" fill="none" stroke="#BDBDBD" stroke-width="1.3"/></g>
<rect x="346" y="173.4" width="12" height="13" fill="#EEEEF2" stroke="#404040" stroke-width="1.8"/><path d="M350 176.6H355" stroke="#404040" stroke-width="1.3"/><path d="M349.6 184.6V183M352.2 184.6V181.6M354.8 184.6V179.6" stroke="#404040" stroke-width="1.4"/><path d="M341.8 170.8L348.4 176L341.8 181.2Z" fill="#E8202A"/>
<circle cx="384.8" cy="173.2" r="5.6" fill="#404040"/><rect x="383.8" y="172.2" width="2.2" height="4.2" fill="#fff"/><rect x="383.8" y="169.6" width="2.2" height="1.8" fill="#fff"/><text x="378" y="189" font-size="9.2" font-weight="bold" fill="#404040" textLength="16.4" lengthAdjust="spacingAndGlyphs" font-family="Liberation Mono,monospace">SQL</text>
<g transform="translate(409.4,169.5)"><path d="M2.5 10V5.5C2.5 3.4 9.8 3.4 9.8 5.5" fill="none" stroke="#404040" stroke-width="1.7"/><path d="M6.5 4V2.8C6.5 0.6 17 0.6 17 2.8V10" fill="none" stroke="#404040" stroke-width="1.7"/><path d="M10.5 3.5C13.5 3 14.3 4.5 14.3 6V10M12.3 5.2V10" fill="none" stroke="#404040" stroke-width="1.2"/><path d="M3.4 5.4C5 4.6 7.5 4.7 9 5.4V8H3.4Z" fill="#404040"/><g transform="translate(0,9.8)"><rect x="0" y="0" width="20" height="9.8" fill="#404040"/><text x="10.0" y="8.3" font-size="8.6" font-weight="bold" fill="#fff" text-anchor="middle" textLength="16.5" lengthAdjust="spacingAndGlyphs" font-family="Liberation Sans,sans-serif">SQL</text></g></g>
<rect x="435.8" y="162.9" width="32.8" height="31.4" fill="#F1F1F1" stroke="#1C84D6" stroke-width="1.6"/>
<rect x="445.3" y="170.8" width="15.8" height="15.6" fill="none" stroke="#404040" stroke-width="1.9"/><rect x="448.0" y="173.4" width="2.6" height="2.6" fill="#404040"/><rect x="448.0" y="177.70000000000002" width="2.6" height="2.6" fill="#404040"/><rect x="448.0" y="182.0" width="2.6" height="2.6" fill="#404040"/><rect x="452.3" y="173.4" width="2.6" height="2.6" fill="#404040"/><rect x="452.3" y="177.70000000000002" width="2.6" height="2.6" fill="#404040"/><rect x="452.3" y="182.0" width="2.6" height="2.6" fill="#404040"/><rect x="456.6" y="173.4" width="2.6" height="2.6" fill="#404040"/><rect x="456.6" y="177.70000000000002" width="2.6" height="2.6" fill="#404040"/><rect x="456.6" y="182.0" width="2.6" height="2.6" fill="#404040"/>
<g transform="translate(477.4,168.4)"><path d="M6 0.8H3V8L0.8 10L3 12V20H6M14.6 0.8H17.6V8L19.8 10L17.6 12V20H14.6" fill="none" stroke="#404040" stroke-width="1.6"/><path d="M6.6 6H14.5M6.6 10H12M6.6 14H14.5" stroke="#404040" stroke-width="1.5"/></g>
<g transform="translate(511.6,168.2)"><path d="M5 0.8H2.6V7.4L0.6 9L2.6 10.6V18.2H5" fill="none" stroke="#404040" stroke-width="1.5"/><path d="M15 0.8H17.6V7" fill="none" stroke="#404040" stroke-width="1.5"/><path d="M6 4.2H14.5M6.4 8H11.4M6 11.4H8.6" stroke="#404040" stroke-width="1.4"/><g transform="translate(13.6,14.2)"><path d="M5.77 -0.57L5.77 0.57L4.11 1.25L3.79 2.02L4.48 3.68L3.68 4.48L2.02 3.79L1.25 4.11L0.57 5.77L-0.57 5.77L-1.25 4.11L-2.02 3.79L-3.68 4.48L-4.48 3.68L-3.79 2.02L-4.11 1.25L-5.77 0.57L-5.77 -0.57L-4.11 -1.25L-3.79 -2.02L-4.48 -3.68L-3.68 -4.48L-2.02 -3.79L-1.25 -4.11L-0.57 -5.77L0.57 -5.77L1.25 -4.11L2.02 -3.79L3.68 -4.48L4.48 -3.68L3.79 -2.02L4.11 -1.25Z" fill="#404040"/><circle r="2.09" fill="#EEEEF2"/><circle r="3.1" fill="#EEEEF2"/><circle r="2.5" fill="#404040"/><circle r="0.9" fill="#EEEEF2"/></g></g>
<rect x="548.2" y="169" width="18" height="17.6" fill="#F4F4F4" stroke="#404040" stroke-width="1.8"/><rect x="558.6" y="168.2" width="8.5" height="19.2" fill="#404040"/>
<rect x="5.4" y="207.1" width="1.6" height="1.6" fill="#FAFAFF"/><rect x="6.4" y="208.0" width="2.5" height="2.5" fill="#111"/><rect x="5.4" y="213.15" width="1.6" height="1.6" fill="#FAFAFF"/><rect x="6.4" y="214.05" width="2.5" height="2.5" fill="#111"/><rect x="5.4" y="219.2" width="1.6" height="1.6" fill="#FAFAFF"/><rect x="6.4" y="220.1" width="2.5" height="2.5" fill="#111"/><rect x="5.4" y="225.25" width="1.6" height="1.6" fill="#FAFAFF"/><rect x="6.4" y="226.15" width="2.5" height="2.5" fill="#111"/>
<g transform="translate(25.6,210.5)"><path d="M4.5 0.9H9.6M14.1 5.4V16.4H0.9V6" fill="none" stroke="#404040" stroke-width="1.8"/><path d="M9.2 0L15 5.8H9.2Z" fill="#404040"/></g>
<path d="M22.599999999999998 206.8h3v3.2h3.2v3h-3.2v3.2h-3v-3.2h-3.2v-3h3.2z" fill="#2E8B37"/>
<g transform="translate(60.2,210.5)"><path d="M4.5 0.9H9.6M14.1 5.4V16.4H0.9V6" fill="none" stroke="#404040" stroke-width="1.8"/><path d="M9.2 0L15 5.8H9.2Z" fill="#404040"/><path d="M3.6 7H8M3.6 10.2H11.4M3.6 13.4H11.4" stroke="#404040" stroke-width="1.4"/></g>
<path d="M57.2 206.8h3v3.2h3.2v3h-3.2v3.2h-3v-3.2h-3.2v-3h3.2z" fill="#2E8B37"/>
<rect x="84.5" y="206" width="1" height="24" fill="#CCCEDB"/>
<g transform="translate(103.4,210.5)"><path d="M4.5 0.9H9.6M14.1 5.4V16.4H0.9V6" fill="none" stroke="#404040" stroke-width="1.8"/><path d="M9.2 0L15 5.8H9.2Z" fill="#404040"/></g>
<rect x="97.5" y="209.9" width="8.8" height="3.3" fill="#E8202A"/>
<rect x="128" y="206" width="1" height="24" fill="#CCCEDB"/>
<g transform="translate(147.2,210.5)"><path d="M4.5 0.9H9.6M14.1 5.4V16.4H0.9V6" fill="none" stroke="#404040" stroke-width="1.8"/><path d="M9.2 0L15 5.8H9.2Z" fill="#404040"/></g>
<path d="M142.4 211.3L147.4 206.8V209.6H152.6V213H147.4V215.8Z" fill="#1A5FB4"/>
<g transform="translate(181.6,210.5)"><path d="M4.5 0.9H9.6M14.1 5.4V16.4H0.9V6" fill="none" stroke="#404040" stroke-width="1.8"/><path d="M9.2 0L15 5.8H9.2Z" fill="#404040"/></g>
<path d="M187.2 211.3L182.2 206.8V209.6H177V213H182.2V215.8Z" fill="#1A5FB4"/>
<rect x="210.6" y="207.1" width="1.6" height="1.6" fill="#FAFAFF"/><rect x="211.6" y="208.0" width="2.5" height="2.5" fill="#111"/><rect x="210.6" y="213.15" width="1.6" height="1.6" fill="#FAFAFF"/><rect x="211.6" y="214.05" width="2.5" height="2.5" fill="#111"/><rect x="210.6" y="219.2" width="1.6" height="1.6" fill="#FAFAFF"/><rect x="211.6" y="220.1" width="2.5" height="2.5" fill="#111"/><rect x="210.6" y="225.25" width="1.6" height="1.6" fill="#FAFAFF"/><rect x="211.6" y="226.15" width="2.5" height="2.5" fill="#111"/>
<path d="M225.2 226L226.4 222.4L235 213.8L237.4 216.2L228.8 224.8Z" fill="#B0B0B0"/><path d="M234.4 211.6L239.6 216.8L241 215.4L239.4 213.8C243 210.4 239.6 207 236.6 210.4L235.8 210.2Z" fill="#A8A8A8"/>
<rect x="252.00" y="208.40" width="2.3" height="2.3" fill="#D2D2D2"/><rect x="252.00" y="210.68" width="2.3" height="2.3" fill="#F3F3F3"/><rect x="252.00" y="212.96" width="2.3" height="2.3" fill="#D2D2D2"/><rect x="252.00" y="215.24" width="2.3" height="2.3" fill="#F3F3F3"/><rect x="252.00" y="217.52" width="2.3" height="2.3" fill="#D2D2D2"/><rect x="252.00" y="219.80" width="2.3" height="2.3" fill="#F3F3F3"/><rect x="252.00" y="222.08" width="2.3" height="2.3" fill="#D2D2D2"/><rect x="252.00" y="224.36" width="2.3" height="2.3" fill="#F3F3F3"/><rect x="254.28" y="208.40" width="2.3" height="2.3" fill="#F3F3F3"/><rect x="254.28" y="210.68" width="2.3" height="2.3" fill="#D2D2D2"/><rect x="254.28" y="212.96" width="2.3" height="2.3" fill="#F3F3F3"/><rect x="254.28" y="215.24" width="2.3" height="2.3" fill="#D2D2D2"/><rect x="254.28" y="217.52" width="2.3" height="2.3" fill="#F3F3F3"/><rect x="254.28" y="219.80" width="2.3" height="2.3" fill="#D2D2D2"/><rect x="254.28" y="222.08" width="2.3" height="2.3" fill="#F3F3F3"/><rect x="254.28" y="224.36" width="2.3" height="2.3" fill="#D2D2D2"/><rect x="256.56" y="208.40" width="2.3" height="2.3" fill="#D2D2D2"/><rect x="256.56" y="210.68" width="2.3" height="2.3" fill="#F3F3F3"/><rect x="256.56" y="212.96" width="2.3" height="2.3" fill="#D2D2D2"/><rect x="256.56" y="215.24" width="2.3" height="2.3" fill="#F3F3F3"/><rect x="256.56" y="217.52" width="2.3" height="2.3" fill="#D2D2D2"/><rect x="256.56" y="219.80" width="2.3" height="2.3" fill="#F3F3F3"/><rect x="256.56" y="222.08" width="2.3" height="2.3" fill="#D2D2D2"/><rect x="256.56" y="224.36" width="2.3" height="2.3" fill="#F3F3F3"/><rect x="258.84" y="208.40" width="2.3" height="2.3" fill="#F3F3F3"/><rect x="258.84" y="210.68" width="2.3" height="2.3" fill="#D2D2D2"/><rect x="258.84" y="212.96" width="2.3" height="2.3" fill="#F3F3F3"/><rect x="258.84" y="215.24" width="2.3" height="2.3" fill="#D2D2D2"/><rect x="258.84" y="217.52" width="2.3" height="2.3" fill="#F3F3F3"/><rect x="258.84" y="219.80" width="2.3" height="2.3" fill="#D2D2D2"/><rect x="258.84" y="222.08" width="2.3" height="2.3" fill="#F3F3F3"/><rect x="258.84" y="224.36" width="2.3" height="2.3" fill="#D2D2D2"/><rect x="261.12" y="208.40" width="2.3" height="2.3" fill="#D2D2D2"/><rect x="261.12" y="210.68" width="2.3" height="2.3" fill="#F3F3F3"/><rect x="261.12" y="212.96" width="2.3" height="2.3" fill="#D2D2D2"/><rect x="261.12" y="215.24" width="2.3" height="2.3" fill="#F3F3F3"/><rect x="261.12" y="217.52" width="2.3" height="2.3" fill="#D2D2D2"/><rect x="261.12" y="219.80" width="2.3" height="2.3" fill="#F3F3F3"/><rect x="261.12" y="222.08" width="2.3" height="2.3" fill="#D2D2D2"/><rect x="261.12" y="224.36" width="2.3" height="2.3" fill="#F3F3F3"/><rect x="263.40" y="208.40" width="2.3" height="2.3" fill="#F3F3F3"/><rect x="263.40" y="210.68" width="2.3" height="2.3" fill="#D2D2D2"/><rect x="263.40" y="212.96" width="2.3" height="2.3" fill="#F3F3F3"/><rect x="263.40" y="215.24" width="2.3" height="2.3" fill="#D2D2D2"/><rect x="263.40" y="217.52" width="2.3" height="2.3" fill="#F3F3F3"/><rect x="263.40" y="219.80" width="2.3" height="2.3" fill="#D2D2D2"/><rect x="263.40" y="222.08" width="2.3" height="2.3" fill="#F3F3F3"/><rect x="263.40" y="224.36" width="2.3" height="2.3" fill="#D2D2D2"/><rect x="265.68" y="208.40" width="2.3" height="2.3" fill="#D2D2D2"/><rect x="265.68" y="210.68" width="2.3" height="2.3" fill="#F3F3F3"/><rect x="265.68" y="212.96" width="2.3" height="2.3" fill="#D2D2D2"/><rect x="265.68" y="215.24" width="2.3" height="2.3" fill="#F3F3F3"/><rect x="265.68" y="217.52" width="2.3" height="2.3" fill="#D2D2D2"/><rect x="265.68" y="219.80" width="2.3" height="2.3" fill="#F3F3F3"/><rect x="265.68" y="222.08" width="2.3" height="2.3" fill="#D2D2D2"/><rect x="265.68" y="224.36" width="2.3" height="2.3" fill="#F3F3F3"/><rect x="267.96" y="208.40" width="2.3" height="2.3" fill="#F3F3F3"/><rect x="267.96" y="210.68" width="2.3" height="2.3" fill="#D2D2D2"/><rect x="267.96" y="212.96" width="2.3" height="2.3" fill="#F3F3F3"/><rect x="267.96" y="215.24" width="2.3" height="2.3" fill="#D2D2D2"/><rect x="267.96" y="217.52" width="2.3" height="2.3" fill="#F3F3F3"/><rect x="267.96" y="219.80" width="2.3" height="2.3" fill="#D2D2D2"/><rect x="267.96" y="222.08" width="2.3" height="2.3" fill="#F3F3F3"/><rect x="267.96" y="224.36" width="2.3" height="2.3" fill="#D2D2D2"/>
<rect x="273.5" y="206" width="1" height="24" fill="#CCCEDB"/>
<rect x="308.3" y="201.8" width="18" height="31.5" fill="#F1F1F1" stroke="#1C84D6" stroke-width="1.6"/>
<rect x="316.3" y="215.2" width="2.2" height="2.2" fill="#1e1e1e"/><rect x="316.3" y="221.4" width="2.2" height="2.2" fill="#1e1e1e"/>
<rect x="330.3" y="206" width="1" height="24" fill="#CCCEDB"/>
<rect x="336.8" y="201.8" width="32.8" height="31.5" fill="#F1F1F1" stroke="#1C84D6" stroke-width="1.6"/>
<g transform="translate(343.7,207.4)"><rect x="0" y="0" width="20.8" height="8.4" fill="#404040"/><rect x="1.8" y="2.3" width="11.6" height="4" fill="#fff"/><rect x="3.2" y="3.3" width="1.5" height="2" fill="#404040"/><rect x="6" y="3.3" width="1.5" height="2" fill="#404040"/><path d="M14.8 3H19.4L17.1 5.8Z" fill="#fff"/><path d="M4 8V20H20V8" fill="none" stroke="#404040" stroke-width="1.8"/><path d="M6.4 11.4H12.6M6.4 14.4H16.4M6.4 17.4H11.6" stroke="#404040" stroke-width="1.4"/></g>
<g transform="translate(378.2,207.4)"><rect x="0" y="0" width="20.8" height="8.4" fill="#404040"/><rect x="1.8" y="2.3" width="11.6" height="4" fill="#fff"/><rect x="3.2" y="3.3" width="1.5" height="2" fill="#404040"/><rect x="6" y="3.3" width="1.5" height="2" fill="#404040"/><path d="M14.8 3H19.4L17.1 5.8Z" fill="#fff"/><path d="M4 8V20H11" fill="none" stroke="#404040" stroke-width="1.8"/><path d="M6.4 11.4H12.6M6.4 14.4H11M6.4 17.4H10.6" stroke="#404040" stroke-width="1.4"/><circle cx="16.6" cy="16.4" r="3.5" fill="none" stroke="#2F6FBE" stroke-width="2"/><path d="M15.6 9.6L20.4 12.4L15.6 15Z" fill="#2F6FBE"/><rect x="11" y="10.6" width="4.4" height="4" fill="#EEEEF2"/></g>
<path d="M76 253L85.5 262.5M85.5 253L76 262.5" stroke="#111" stroke-width="2.6" fill="none"/>
<g transform="translate(111,249.4)"><path d="M4.5 0.9H9.6M14.1 5.4V16.4H0.9V6" fill="none" stroke="#404040" stroke-width="1.8"/><path d="M9.2 0L15 5.8H9.2Z" fill="#404040"/></g>
<path d="M108.2 245.8h3v3.2h3.2v3h-3.2v3.2h-3v-3.2h-3.2v-3h3.2z" fill="#2E8B37"/>
<path d="M1705 255H1713.5L1709.25 259.8Z" fill="#9A9A9A"/>
<path d="M1732.5 256.5L1739 250.4V253.9H1746.2V259.1H1739V262.6Z" fill="#10539D"/>
<path d="M1780 256.5L1773.5 250.4V253.9H1766.9V259.1H1773.5V262.6Z" fill="#10539D"/>
<circle cx="1805.2" cy="254.6" r="5.9" fill="none" stroke="#404040" stroke-width="1.7"/><path d="M1809.6 259L1817 266.2" stroke="#404040" stroke-width="3"/>
<rect x="1887.9" y="248.4" width="19.4" height="16.6" fill="#F4F4F4" stroke="#404040" stroke-width="1.8"/><rect x="1887" y="247.5" width="21.2" height="4" fill="#404040"/><path d="M1897.6 251V265" stroke="#404040" stroke-width="1.8"/>
<path d="M1897 292H1913" stroke="#404040" stroke-width="1.4"/><path d="M1901 289.6H1909L1905 285.4ZM1901 294.4H1909L1905 298.6Z" fill="#404040"/>
<path d="M1897.5 321.4H1910.7L1904.1 314.4Z" fill="#A0A0A0"/><path d="M1897.5 479.8H1910.7L1904.1 486.8Z" fill="#8C8C8C"/>
<path d="M45.4 500V513.2L37.6 506.6Z" fill="#A6A6A6"/><path d="M1876.4 500V513L1884 506.5Z" fill="#929292"/>
<path d="M14 499.5V513" stroke="#404040" stroke-width="1.3"/><path d="M12 502.8V509.6L7.6 506.2ZM16 502.8V509.6L20.4 506.2Z" fill="#404040"/>
<path d="M7.6 279.4L19.6 288L7.6 296.6Z" fill="#2E8B37"/>
<rect x="53.3" y="281.8" width="12" height="12" fill="#fff" stroke="#222" stroke-width="1.6"/><path d="M56 287.8H62.6" stroke="#222" stroke-width="1.6"/>
<path d="M59.3 294.6V467H65.6M71 467H82.4" fill="none" stroke="#4A4A4A" stroke-width="1.2"/><path d="M71 276.8H82" stroke="#8A8A8A" stroke-width="1"/>
<rect x="945" y="522.5" width="1.2" height="1.2" fill="#B4B4BC"/><rect x="945" y="526.5" width="1.2" height="1.2" fill="#B4B4BC"/><rect x="947" y="524.5" width="1.2" height="1.2" fill="#B4B4BC"/><rect x="949" y="522.5" width="1.2" height="1.2" fill="#B4B4BC"/><rect x="949" y="526.5" width="1.2" height="1.2" fill="#B4B4BC"/><rect x="951" y="524.5" width="1.2" height="1.2" fill="#B4B4BC"/><rect x="953" y="522.5" width="1.2" height="1.2" fill="#B4B4BC"/><rect x="953" y="526.5" width="1.2" height="1.2" fill="#B4B4BC"/><rect x="955" y="524.5" width="1.2" height="1.2" fill="#B4B4BC"/><rect x="957" y="522.5" width="1.2" height="1.2" fill="#B4B4BC"/><rect x="957" y="526.5" width="1.2" height="1.2" fill="#B4B4BC"/><rect x="959" y="524.5" width="1.2" height="1.2" fill="#B4B4BC"/><rect x="961" y="522.5" width="1.2" height="1.2" fill="#B4B4BC"/><rect x="961" y="526.5" width="1.2" height="1.2" fill="#B4B4BC"/><rect x="963" y="524.5" width="1.2" height="1.2" fill="#B4B4BC"/><rect x="965" y="522.5" width="1.2" height="1.2" fill="#B4B4BC"/><rect x="965" y="526.5" width="1.2" height="1.2" fill="#B4B4BC"/><rect x="967" y="524.5" width="1.2" height="1.2" fill="#B4B4BC"/><rect x="969" y="522.5" width="1.2" height="1.2" fill="#B4B4BC"/><rect x="969" y="526.5" width="1.2" height="1.2" fill="#B4B4BC"/>
<g transform="translate(46.4,549.2)"><path d="M0 0L6.4 5.2L0 10.4Z" fill="#2E8B37"/><rect x="13.2" y="3.9" width="6.3" height="6" fill="none" stroke="#404040" stroke-width="1.5"/><rect x="5.4" y="10.2" width="4.6" height="4.6" fill="none" stroke="#404040" stroke-width="1.5"/><path d="M7.8 10V7.2H12.6" fill="none" stroke="#404040" stroke-width="1.5"/></g>
<rect x="75" y="545" width="1" height="23" fill="#CCCEDB"/>
<path d="M98.2 556.6L102.4 561L110.6 549.8" fill="none" stroke="#6A6A6A" stroke-width="2.4"/>
<path d="M1359 650.4H1370.4L1364.7 644.2Z" fill="#8C8C8C"/>
<rect x="45.55" y="641.6500000000001" width="12.2" height="12" fill="#fff" stroke="#9C9C9C" stroke-width="1.1"/><path d="M47.9 647.6h7.6" stroke="#2A2A2A" stroke-width="1.7"/>
<g transform="translate(73.3,639.2)"><path d="M0 3.7H6.3L7.5 0.3H19.6V16.5H0Z" fill="#D9B37B"/><path d="M9.4 1.7H17.9V3H9.4Z" fill="#FBF3E4"/></g>
<rect x="72.55" y="668.45" width="12.2" height="12" fill="#fff" stroke="#9C9C9C" stroke-width="1.1"/><path d="M74.9 674.4h7.6" stroke="#2A2A2A" stroke-width="1.7"/>
<g transform="translate(100.4,666.3)"><path d="M0 3.7H6.3L7.5 0.3H19.6V16.5H0Z" fill="#D9B37B"/><path d="M9.4 1.7H17.9V3H9.4Z" fill="#FBF3E4"/></g>
<rect x="99.55" y="695.6500000000001" width="12.2" height="12" fill="#fff" stroke="#9C9C9C" stroke-width="1.1"/><path d="M101.9 701.6h7.6" stroke="#2A2A2A" stroke-width="1.7"/>
<g transform="translate(127.3,693.4)"><path d="M0 3.7H6.3L7.5 0.3H19.6V16.5H0Z" fill="#D9B37B"/><path d="M9.4 1.7H17.9V3H9.4Z" fill="#FBF3E4"/></g>
<g transform="translate(154.4,720.6)"><rect x="6.9" y="0.9" width="6.4" height="5.4" fill="#fff" stroke="#404040" stroke-width="1.6"/><path d="M10.1 6.8V10M2.7 13V10H17.5V13M10.1 10V13" fill="none" stroke="#404040" stroke-width="1.5"/><rect x="0.8" y="13.2" width="3.8" height="3.8" fill="#fff" stroke="#404040" stroke-width="1.5"/><rect x="8.2" y="13.2" width="3.8" height="3.8" fill="#fff" stroke="#404040" stroke-width="1.5"/><rect x="15.6" y="13.2" width="3.8" height="3.8" fill="#fff" stroke="#404040" stroke-width="1.5"/></g>
<g transform="translate(154.4,747.8)"><rect x="6.9" y="0.9" width="6.4" height="5.4" fill="#fff" stroke="#404040" stroke-width="1.6"/><path d="M10.1 6.8V10M2.7 13V10H17.5V13M10.1 10V13" fill="none" stroke="#404040" stroke-width="1.5"/><rect x="0.8" y="13.2" width="3.8" height="3.8" fill="#fff" stroke="#404040" stroke-width="1.5"/><rect x="8.2" y="13.2" width="3.8" height="3.8" fill="#fff" stroke="#404040" stroke-width="1.5"/><rect x="15.6" y="13.2" width="3.8" height="3.8" fill="#fff" stroke="#404040" stroke-width="1.5"/></g>
<rect x="1386.5" y="724" width="1.2" height="1.2" fill="#B4B4BC"/><rect x="1390.5" y="724" width="1.2" height="1.2" fill="#B4B4BC"/><rect x="1388.5" y="726" width="1.2" height="1.2" fill="#B4B4BC"/><rect x="1386.5" y="728" width="1.2" height="1.2" fill="#B4B4BC"/><rect x="1390.5" y="728" width="1.2" height="1.2" fill="#B4B4BC"/><rect x="1388.5" y="730" width="1.2" height="1.2" fill="#B4B4BC"/><rect x="1386.5" y="732" width="1.2" height="1.2" fill="#B4B4BC"/><rect x="1390.5" y="732" width="1.2" height="1.2" fill="#B4B4BC"/><rect x="1388.5" y="734" width="1.2" height="1.2" fill="#B4B4BC"/><rect x="1386.5" y="736" width="1.2" height="1.2" fill="#B4B4BC"/><rect x="1390.5" y="736" width="1.2" height="1.2" fill="#B4B4BC"/><rect x="1388.5" y="738" width="1.2" height="1.2" fill="#B4B4BC"/><rect x="1386.5" y="740" width="1.2" height="1.2" fill="#B4B4BC"/><rect x="1390.5" y="740" width="1.2" height="1.2" fill="#B4B4BC"/><rect x="1388.5" y="742" width="1.2" height="1.2" fill="#B4B4BC"/><rect x="1386.5" y="744" width="1.2" height="1.2" fill="#B4B4BC"/><rect x="1390.5" y="744" width="1.2" height="1.2" fill="#B4B4BC"/><rect x="1388.5" y="746" width="1.2" height="1.2" fill="#B4B4BC"/><rect x="1386.5" y="748" width="1.2" height="1.2" fill="#B4B4BC"/><rect x="1390.5" y="748" width="1.2" height="1.2" fill="#B4B4BC"/>
<rect x="1641" y="586" width="1.2" height="1.2" fill="#B4B4BC"/><rect x="1641" y="590" width="1.2" height="1.2" fill="#B4B4BC"/><rect x="1643" y="588" width="1.2" height="1.2" fill="#B4B4BC"/><rect x="1645" y="586" width="1.2" height="1.2" fill="#B4B4BC"/><rect x="1645" y="590" width="1.2" height="1.2" fill="#B4B4BC"/><rect x="1647" y="588" width="1.2" height="1.2" fill="#B4B4BC"/><rect x="1649" y="586" width="1.2" height="1.2" fill="#B4B4BC"/><rect x="1649" y="590" width="1.2" height="1.2" fill="#B4B4BC"/><rect x="1651" y="588" width="1.2" height="1.2" fill="#B4B4BC"/><rect x="1653" y="586" width="1.2" height="1.2" fill="#B4B4BC"/><rect x="1653" y="590" width="1.2" height="1.2" fill="#B4B4BC"/><rect x="1655" y="588" width="1.2" height="1.2" fill="#B4B4BC"/><rect x="1657" y="586" width="1.2" height="1.2" fill="#B4B4BC"/><rect x="1657" y="590" width="1.2" height="1.2" fill="#B4B4BC"/><rect x="1659" y="588" width="1.2" height="1.2" fill="#B4B4BC"/><rect x="1661" y="586" width="1.2" height="1.2" fill="#B4B4BC"/><rect x="1661" y="590" width="1.2" height="1.2" fill="#B4B4BC"/><rect x="1663" y="588" width="1.2" height="1.2" fill="#B4B4BC"/><rect x="1665" y="586" width="1.2" height="1.2" fill="#B4B4BC"/><rect x="1665" y="590" width="1.2" height="1.2" fill="#B4B4BC"/>
<path d="M1403.8 619.6H1413.2V609.6Z" fill="#6A6A6A"/>
<rect x="1641" y="794" width="1.2" height="1.2" fill="#B4B4BC"/><rect x="1641" y="798" width="1.2" height="1.2" fill="#B4B4BC"/><rect x="1643" y="796" width="1.2" height="1.2" fill="#B4B4BC"/><rect x="1645" y="794" width="1.2" height="1.2" fill="#B4B4BC"/><rect x="1645" y="798" width="1.2" height="1.2" fill="#B4B4BC"/><rect x="1647" y="796" width="1.2" height="1.2" fill="#B4B4BC"/><rect x="1649" y="794" width="1.2" height="1.2" fill="#B4B4BC"/><rect x="1649" y="798" width="1.2" height="1.2" fill="#B4B4BC"/><rect x="1651" y="796" width="1.2" height="1.2" fill="#B4B4BC"/><rect x="1653" y="794" width="1.2" height="1.2" fill="#B4B4BC"/><rect x="1653" y="798" width="1.2" height="1.2" fill="#B4B4BC"/><rect x="1655" y="796" width="1.2" height="1.2" fill="#B4B4BC"/><rect x="1657" y="794" width="1.2" height="1.2" fill="#B4B4BC"/><rect x="1657" y="798" width="1.2" height="1.2" fill="#B4B4BC"/><rect x="1659" y="796" width="1.2" height="1.2" fill="#B4B4BC"/><rect x="1661" y="794" width="1.2" height="1.2" fill="#B4B4BC"/><rect x="1661" y="798" width="1.2" height="1.2" fill="#B4B4BC"/><rect x="1663" y="796" width="1.2" height="1.2" fill="#B4B4BC"/><rect x="1665" y="794" width="1.2" height="1.2" fill="#B4B4BC"/><rect x="1665" y="798" width="1.2" height="1.2" fill="#B4B4BC"/>
</svg>
</div>
</body></html>
